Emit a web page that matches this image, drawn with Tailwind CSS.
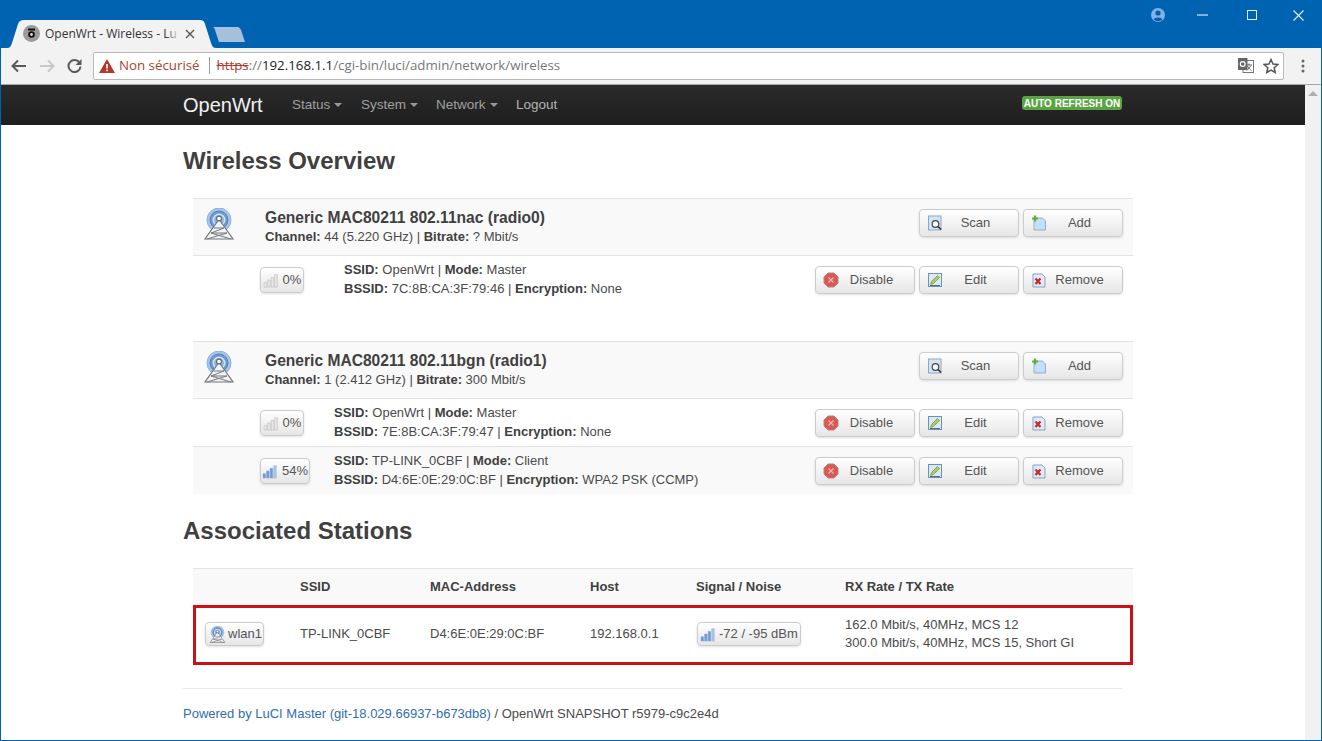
<!DOCTYPE html>
<html lang="fr">
<head>
<meta charset="UTF-8">
<title>OpenWrt - Wireless - LuCI</title>
<script src="https://cdn.jsdelivr.net/npm/@tailwindcss/browser@4"></script>
</head>
<body class="w-[1322px] h-[741px] overflow-hidden bg-white font-['Liberation_Sans',Arial,sans-serif] text-[13px] text-[#4a4a4a]">
<svg width="0" height="0" class="absolute">
  <defs>
    <symbol id="tower" viewBox="0 0 32 32">
      <circle cx="16" cy="12" r="12" fill="#a9c6e8" stroke="#8fb0d8" stroke-width="1"/>
      <circle cx="16" cy="12" r="9" fill="#6d9ad2" stroke="#4f82c2" stroke-width="1"/>
      <circle cx="16" cy="12" r="6.500" fill="#d6e4f5"/>
      <circle cx="16" cy="12" r="5" fill="#8fb2de"/>
      <circle cx="16" cy="10.500" r="2.400" fill="#fff" stroke="#666" stroke-width="1.100"/>
      <path d="M14.800 13 L2 31 H30 L17.200 13 Z" fill="#f4f4f4" stroke="#6f7780" stroke-width="1.200"/>
      <path d="M11 20 H21 M21 20 L8 25 H24 M24 25 L4 31 M8 25 L28 31" fill="none" stroke="#6f7780" stroke-width="1"/>
    </symbol>
    <symbol id="bars-off" viewBox="0 0 20 18">
      <path d="M1 12h3v5H1zM5 9h3v8H5zM9 6h3v11H9zM13 3h3v14h-3z" fill="#e9e9e9" stroke="#c2c2c2" stroke-width=".8"/>
    </symbol>
    <symbol id="bars-on" viewBox="0 0 20 18">
      <path d="M1 12h3v5H1zM5 9h3v8H5zM9 6h3v11H9z" fill="#6f99cf" stroke="#8fb0da" stroke-width=".6"/>
      <path d="M13 3h3v14h-3z" fill="#a9c2e2" stroke="#a9bfdc" stroke-width=".6"/>
    </symbol>
    <symbol id="scan" viewBox="0 0 16 16">
      <rect x="1.500" y="1" width="12.500" height="14" fill="#d3e4f5" stroke="#8aa9ca"/>
      <circle cx="8.500" cy="9" r="3.300" fill="#fff" stroke="#444" stroke-width="1.200"/>
      <path d="M11 11.500l3 3" stroke="#333" stroke-width="1.600"/>
    </symbol>
    <symbol id="add" viewBox="0 0 16 16">
      <path d="M3 3h8.500l3 3v9H3z" fill="#c5e0f6" stroke="#8cb0d2"/>
      <path d="M4 .500v6M1 3.500h6" stroke="#62ab3c" stroke-width="2.200"/>
    </symbol>
    <symbol id="disable" viewBox="0 0 16 16">
      <path d="M5 1h6l4 4v6l-4 4H5l-4-4V5z" fill="#d65a55" stroke="#b9807c"/>
      <path d="M5.500 5.500l5 5M10.500 5.500l-5 5" stroke="#f0b5b2" stroke-width="1.200"/>
    </symbol>
    <symbol id="edit" viewBox="0 0 16 16">
      <rect x="1.500" y="1.500" width="13" height="13" fill="#dbe9f7" stroke="#6f91b8"/>
      <path d="M3.500 12.500l1-3 6-6 2 2-6 6z" fill="#b3c665" stroke="#7b8f3d" stroke-width=".7"/>
      <path d="M3 13.500h10" stroke="#4a6d96"/>
    </symbol>
    <symbol id="remove" viewBox="0 0 16 16">
      <path d="M2 2h9l3 3v10H2z" fill="#dfeaf6" stroke="#86a3c2"/>
      <path d="M4.500 6.500l5 5.500M9.500 6.500l-5 5.500" stroke="#c9252b" stroke-width="2.200"/>
    </symbol>
  </defs>
</svg>

<div class="flex flex-col h-[741px] border-x border-b border-[#0063b1]">
  <!-- tab strip -->
  <div class="relative h-[48px] shrink-0 bg-[#0063b1]">
    <svg class="absolute left-[5px] top-[20px]" width="242" height="28" viewBox="0 0 242 28">
      <path d="M1 28 C4 28 5 26 6 23 L12 4 C13 1 15 0 18 0 H194 C197 0 198 1 199 4 L205 23 C206 26 207 28 210 28 Z" fill="#f2f2f2"/>
      <path d="M206 7 H231 C233 7 234 8 235 10 L239 22 H213 L209 10 C208.500 8 208 7 206 7 Z" fill="#a6c0dc"/>
    </svg>
    <div class="absolute left-[22px] top-[25px] w-[17px] h-[17px] rounded-full bg-[#9a9a9a] flex items-center justify-center">
      <svg width="11" height="13" viewBox="0 0 11 13"><path d="M2 2.500h7" stroke="#111" stroke-width="2"/><circle cx="5.500" cy="7.500" r="3.300" fill="#111"/><circle cx="5.500" cy="7.500" r="1.400" fill="#ddd"/></svg>
    </div>
    <div class="absolute left-[44px] top-[25px] w-[140px] h-[17px] whitespace-nowrap font-['Open_Sans',sans-serif] text-[12px] leading-[17px] text-[#333]">OpenWrt - Wireless - Lu</div>
    <div class="absolute left-[165px] top-[25px] w-[14px] h-[17px] bg-gradient-to-r from-transparent to-[#f2f2f2]"></div>
    <svg class="absolute left-[184px] top-[29px]" width="10" height="10" viewBox="0 0 10 10"><path d="M1 1l8 8M9 1l-8 8" stroke="#555" stroke-width="1.400"/></svg>
    <div class="absolute right-[0px] top-0 flex items-start h-[30px]">
      <svg class="mt-[8px] mr-[32px]" width="14" height="14" viewBox="0 0 14 14"><circle cx="7" cy="7" r="7" fill="#7fb2e5"/><circle cx="7" cy="5" r="2.600" fill="#0a5ca8"/><path d="M2.600 11.500c1-2.800 7.800-2.800 8.800 0a6.500 6.500 0 0 1-8.800 0z" fill="#0a5ca8"/></svg>
      <svg class="mt-[14px] mr-[39px]" width="11" height="2" viewBox="0 0 11 2"><path d="M0 1h11" stroke="#d4e6f7" stroke-width="1.200"/></svg>
      <svg class="mt-[10px] mr-[36px]" width="10" height="10" viewBox="0 0 10 10"><rect x=".5" y=".5" width="9" height="9" fill="none" stroke="#e6f0fa"/></svg>
      <svg class="mt-[10px] mr-[17px]" width="11" height="11" viewBox="0 0 11 11"><path d="M.5.500l10 10M10.500.500l-10 10" stroke="#e6f0fa" stroke-width="1.100"/></svg>
    </div>
  </div>

  <!-- toolbar -->
  <div class="h-[37px] shrink-0 flex items-center bg-[#f2f2f2] border-b border-[#a8a8a8] pb-[1px]">
    <svg class="ml-[10px]" width="16" height="14" viewBox="0 0 16 14"><path d="M15 7H2M7 1.500L1.500 7 7 12.500" fill="none" stroke="#5a5a5a" stroke-width="2"/></svg>
    <svg class="ml-[12px]" width="16" height="14" viewBox="0 0 16 14"><path d="M1 7h13M9 1.500L14.500 7 9 12.500" fill="none" stroke="#c8c8c8" stroke-width="2"/></svg>
    <svg class="ml-[12px]" width="15" height="15" viewBox="0 0 15 15"><path d="M12.700 5A6 6 0 1 0 13.500 8.500" fill="none" stroke="#5a5a5a" stroke-width="2"/><path d="M14.500 1v6h-6z" fill="#5a5a5a"/></svg>
    <div class="ml-[11px] w-[1191px] h-[28px] flex items-center rounded-[2px] border border-[#b8b8b8] bg-white font-['Open_Sans',sans-serif] text-[13.300px] whitespace-nowrap">
      <svg class="ml-[5px]" width="16" height="14" viewBox="0 0 16 14"><path d="M8 0l8 14H0z" fill="#b3392c"/><path d="M8 5v4.500M8 10.500v1.700" stroke="#fff" stroke-width="1.500"/></svg>
      <span class="ml-[4px] text-[#a5462f]">Non sécurisé</span>
      <span class="ml-[9px] w-px h-[17px] bg-[#999]"></span>
      <span class="ml-[7px] text-[#b3392c] line-through">https</span><span class="text-[#777]">://</span><span class="text-[#222]">192.168.1.1</span><span class="text-[#777]">/cgi-bin/luci/admin/network/wireless</span>
      <div class="ml-auto flex items-center">
        <svg width="16" height="16" viewBox="0 0 16 16"><rect x="5" y="2.500" width="10.500" height="12" fill="#fff" stroke="#777"/><path d="M8 7h6M11 5.500v1.500M9 12.500l4-5M9.500 8c1 2 2.500 3.500 4 4.500" fill="none" stroke="#666"/><rect x="0" y="0" width="9.500" height="12" fill="#666"/><circle cx="4.700" cy="6" r="2.400" fill="none" stroke="#fff" stroke-width="1.200"/></svg>
        <svg class="ml-[9px] mr-[4px]" width="16" height="16" viewBox="0 0 16 16"><path d="M8 1.500l2 4.500 4.800.500-3.600 3.200 1 4.800L8 12.100l-4.200 2.400 1-4.800L1.200 6.500 6 6z" fill="none" stroke="#555" stroke-width="1.500"/></svg>
      </div>
    </div>
    <svg class="ml-[17px]" width="4" height="14" viewBox="0 0 4 14"><circle cx="2" cy="2" r="1.500" fill="#666"/><circle cx="2" cy="7" r="1.500" fill="#666"/><circle cx="2" cy="12" r="1.500" fill="#666"/></svg>
  </div>

  <div class="flex flex-1 min-h-0">
    <!-- page -->
    <div class="w-[1304px] shrink-0 overflow-hidden">
      <nav class="h-[40px] flex items-center pl-[182px] pr-[183px] bg-gradient-to-b from-[#2b2b2b] to-[#1e1e1e] text-[13.500px] text-[#a0a0a0]">
        <span class="text-[20px] text-[#f0f0f0] w-[109px]">OpenWrt</span>
        <span class="flex items-center w-[69px]">Status<i class="ml-[4px] border-x-[4px] border-t-[4px] border-x-transparent border-t-[#999]"></i></span>
        <span class="flex items-center w-[75px]">System<i class="ml-[4px] border-x-[4px] border-t-[4px] border-x-transparent border-t-[#999]"></i></span>
        <span class="flex items-center w-[80px]">Network<i class="ml-[4px] border-x-[4px] border-t-[4px] border-x-transparent border-t-[#999]"></i></span>
        <span class="text-[#b4b4b4]">Logout</span>
        <span class="ml-auto mb-[4px] h-[14px] w-[100px] flex items-center justify-center rounded-[3px] bg-[#5aa345] text-[10px] font-bold text-white whitespace-nowrap">AUTO REFRESH ON</span>
      </nav>

      <main class="pl-[182px]">
        <h2 class="mt-[18px] mb-[-1px] h-[36px] text-[24px] leading-[36px] font-bold text-[#404040]">Wireless Overview</h2>

        <!-- radio0 -->
        <section class="mt-[20px] ml-[10px] w-[940px]">
          <div class="h-[58px] flex items-center border-y border-[#e3e3e3] bg-[#f9f9f9] pl-[10px] pr-[10px]">
            <svg class="mb-[6px]" width="32" height="32"><use href="#tower"/></svg>
            <div class="ml-[30px] mb-[2px] leading-[17px]">
              <div class="text-[15.600px] font-bold leading-[20px] text-[#404040]">Generic MAC80211 802.11nac (radio0)</div>
              <div><b class="text-[#404040]">Channel:</b> 44 (5.220 GHz) | <b class="text-[#404040]">Bitrate:</b> ? Mbit/s</div>
            </div>
            <div class="ml-auto mb-[8px] flex gap-[4px]">
              <button class="w-[100px] h-[28px] flex items-center pl-[7px] pr-[10px] rounded-[4px] border border-[#ccc] bg-gradient-to-b from-white to-[#e6e6e6] shadow-sm text-[#555]"><svg width="16" height="16" class="shrink-0"><use href="#scan"/></svg><span class="flex-1 text-center">Scan</span></button>
              <button class="w-[100px] h-[28px] flex items-center pl-[7px] pr-[10px] rounded-[4px] border border-[#ccc] bg-gradient-to-b from-white to-[#e6e6e6] shadow-sm text-[#555]"><svg width="16" height="16" class="shrink-0"><use href="#add"/></svg><span class="flex-1 text-center">Add</span></button>
            </div>
          </div>
          <div class="h-[47px] flex items-center pl-[67px] pr-[10px]">
            <span class="w-[44px] h-[26px] flex items-center justify-center gap-[2px] rounded-[4px] border border-[#ccc] bg-gradient-to-b from-white to-[#e6e6e6] shadow-sm text-[#555]"><svg width="18" height="16"><use href="#bars-off"/></svg>0%</span>
            <div class="ml-[40px] mb-[1px] leading-[19px] whitespace-nowrap">
              <div><b class="text-[#404040]">SSID:</b> OpenWrt | <b class="text-[#404040]">Mode:</b> Master</div>
              <div><b class="text-[#404040]">BSSID:</b> 7C:8B:CA:3F:79:46 | <b class="text-[#404040]">Encryption:</b> None</div>
            </div>
            <div class="ml-auto flex gap-[4px]">
              <button class="w-[100px] h-[28px] flex items-center pl-[7px] pr-[10px] rounded-[4px] border border-[#ccc] bg-gradient-to-b from-white to-[#e6e6e6] shadow-sm text-[#555]"><svg width="16" height="16" class="shrink-0"><use href="#disable"/></svg><span class="flex-1 text-center">Disable</span></button>
              <button class="w-[100px] h-[28px] flex items-center pl-[7px] pr-[10px] rounded-[4px] border border-[#ccc] bg-gradient-to-b from-white to-[#e6e6e6] shadow-sm text-[#555]"><svg width="16" height="16" class="shrink-0"><use href="#edit"/></svg><span class="flex-1 text-center">Edit</span></button>
              <button class="w-[100px] h-[28px] flex items-center pl-[7px] pr-[10px] rounded-[4px] border border-[#ccc] bg-gradient-to-b from-white to-[#e6e6e6] shadow-sm text-[#555]"><svg width="16" height="16" class="shrink-0"><use href="#remove"/></svg><span class="flex-1 text-center">Remove</span></button>
            </div>
          </div>
        </section>

        <!-- radio1 -->
        <section class="mt-[38px] ml-[10px] w-[940px]">
          <div class="h-[58px] flex items-center border-y border-[#e3e3e3] bg-[#f9f9f9] pl-[10px] pr-[10px]">
            <svg class="mb-[6px]" width="32" height="32"><use href="#tower"/></svg>
            <div class="ml-[30px] mb-[2px] leading-[17px]">
              <div class="text-[15.600px] font-bold leading-[20px] text-[#404040]">Generic MAC80211 802.11bgn (radio1)</div>
              <div><b class="text-[#404040]">Channel:</b> 1 (2.412 GHz) | <b class="text-[#404040]">Bitrate:</b> 300 Mbit/s</div>
            </div>
            <div class="ml-auto mb-[8px] flex gap-[4px]">
              <button class="w-[100px] h-[28px] flex items-center pl-[7px] pr-[10px] rounded-[4px] border border-[#ccc] bg-gradient-to-b from-white to-[#e6e6e6] shadow-sm text-[#555]"><svg width="16" height="16" class="shrink-0"><use href="#scan"/></svg><span class="flex-1 text-center">Scan</span></button>
              <button class="w-[100px] h-[28px] flex items-center pl-[7px] pr-[10px] rounded-[4px] border border-[#ccc] bg-gradient-to-b from-white to-[#e6e6e6] shadow-sm text-[#555]"><svg width="16" height="16" class="shrink-0"><use href="#add"/></svg><span class="flex-1 text-center">Add</span></button>
            </div>
          </div>
          <div class="h-[48px] flex items-center border-b border-[#e3e3e3] pl-[67px] pr-[10px]">
            <span class="w-[44px] h-[26px] flex items-center justify-center gap-[2px] rounded-[4px] border border-[#ccc] bg-gradient-to-b from-white to-[#e6e6e6] shadow-sm text-[#555]"><svg width="18" height="16"><use href="#bars-off"/></svg>0%</span>
            <div class="ml-[30px] mb-[1px] leading-[19px] whitespace-nowrap">
              <div><b class="text-[#404040]">SSID:</b> OpenWrt | <b class="text-[#404040]">Mode:</b> Master</div>
              <div><b class="text-[#404040]">BSSID:</b> 7E:8B:CA:3F:79:47 | <b class="text-[#404040]">Encryption:</b> None</div>
            </div>
            <div class="ml-auto flex gap-[4px]">
              <button class="w-[100px] h-[28px] flex items-center pl-[7px] pr-[10px] rounded-[4px] border border-[#ccc] bg-gradient-to-b from-white to-[#e6e6e6] shadow-sm text-[#555]"><svg width="16" height="16" class="shrink-0"><use href="#disable"/></svg><span class="flex-1 text-center">Disable</span></button>
              <button class="w-[100px] h-[28px] flex items-center pl-[7px] pr-[10px] rounded-[4px] border border-[#ccc] bg-gradient-to-b from-white to-[#e6e6e6] shadow-sm text-[#555]"><svg width="16" height="16" class="shrink-0"><use href="#edit"/></svg><span class="flex-1 text-center">Edit</span></button>
              <button class="w-[100px] h-[28px] flex items-center pl-[7px] pr-[10px] rounded-[4px] border border-[#ccc] bg-gradient-to-b from-white to-[#e6e6e6] shadow-sm text-[#555]"><svg width="16" height="16" class="shrink-0"><use href="#remove"/></svg><span class="flex-1 text-center">Remove</span></button>
            </div>
          </div>
          <div class="h-[47px] flex items-center bg-[#f9f9f9] pl-[67px] pr-[10px]">
            <span class="w-[50px] h-[26px] flex items-center justify-center gap-[2px] rounded-[4px] border border-[#ccc] bg-gradient-to-b from-white to-[#e6e6e6] shadow-sm text-[#555]"><svg width="18" height="16"><use href="#bars-on"/></svg>54%</span>
            <div class="ml-[24px] mb-[1px] leading-[19px] whitespace-nowrap">
              <div><b class="text-[#404040]">SSID:</b> TP-LINK_0CBF | <b class="text-[#404040]">Mode:</b> Client</div>
              <div><b class="text-[#404040]">BSSID:</b> D4:6E:0E:29:0C:BF | <b class="text-[#404040]">Encryption:</b> WPA2 PSK (CCMP)</div>
            </div>
            <div class="ml-auto flex gap-[4px]">
              <button class="w-[100px] h-[28px] flex items-center pl-[7px] pr-[10px] rounded-[4px] border border-[#ccc] bg-gradient-to-b from-white to-[#e6e6e6] shadow-sm text-[#555]"><svg width="16" height="16" class="shrink-0"><use href="#disable"/></svg><span class="flex-1 text-center">Disable</span></button>
              <button class="w-[100px] h-[28px] flex items-center pl-[7px] pr-[10px] rounded-[4px] border border-[#ccc] bg-gradient-to-b from-white to-[#e6e6e6] shadow-sm text-[#555]"><svg width="16" height="16" class="shrink-0"><use href="#edit"/></svg><span class="flex-1 text-center">Edit</span></button>
              <button class="w-[100px] h-[28px] flex items-center pl-[7px] pr-[10px] rounded-[4px] border border-[#ccc] bg-gradient-to-b from-white to-[#e6e6e6] shadow-sm text-[#555]"><svg width="16" height="16" class="shrink-0"><use href="#remove"/></svg><span class="flex-1 text-center">Remove</span></button>
            </div>
          </div>
        </section>

        <h2 class="mt-[19px] mb-[-1px] h-[36px] text-[24px] leading-[36px] font-bold text-[#404040]">Associated Stations</h2>

        <section class="mt-[20px] ml-[10px] w-[940px]">
          <div class="h-[37px] grid grid-cols-[107px_130px_160px_106px_149px_1fr] items-center border-t border-[#e3e3e3] bg-[#f9f9f9] font-bold text-[#404040]">
            <span></span><span>SSID</span><span>MAC-Address</span><span>Host</span><span>Signal / Noise</span><span>RX Rate / TX Rate</span>
          </div>
          <div class="h-[60px] grid grid-cols-[104px_130px_160px_106px_149px_1fr] items-center border-[3px] border-[#cc1016]">
            <span class="pl-[9px] mb-[2px]">
              <span class="w-[59px] h-[24px] flex items-center gap-[2px] pl-[3px] rounded-[4px] border border-[#ccc] bg-gradient-to-b from-white to-[#e6e6e6] shadow-sm text-[#555]"><svg width="17" height="17" viewBox="0 0 32 32"><use href="#tower"/></svg>wlan1</span>
            </span>
            <span class="mb-[2px]">TP-LINK_0CBF</span>
            <span class="mb-[2px]">D4:6E:0E:29:0C:BF</span>
            <span class="mb-[2px]">192.168.0.1</span>
            <span class="mb-[2px] pl-[1px]">
              <span class="w-[104px] h-[24px] flex items-center gap-[1px] pl-[2px] rounded-[4px] border border-[#ccc] bg-gradient-to-b from-white to-[#e6e6e6] shadow-sm text-[#555] whitespace-nowrap"><svg width="18" height="16"><use href="#bars-on"/></svg>-72 / -95 dBm</span>
            </span>
            <span class="mb-[3px] leading-[18px] whitespace-nowrap">162.0 Mbit/s, 40MHz, MCS 12<br>300.0 Mbit/s, 40MHz, MCS 15, Short GI</span>
          </div>
        </section>

        <footer class="mt-[23px] w-[939px] border-t border-[#e8e8e8] pt-[15px] leading-[20px]">
          <a class="text-[#2f6fb0]">Powered by LuCI Master (git-18.029.66937-b673db8)</a> / OpenWrt SNAPSHOT r5979-c9c2e4d
        </footer>
      </main>
    </div>

    <!-- scrollbar -->
    <div class="flex-1 bg-[#f1f1f1] pt-[6px] flex justify-center">
      <i class="border-x-[5px] border-b-[5px] border-x-transparent border-b-[#b0b0b0] h-0"></i>
    </div>
  </div>
</div>
</body>
</html>
